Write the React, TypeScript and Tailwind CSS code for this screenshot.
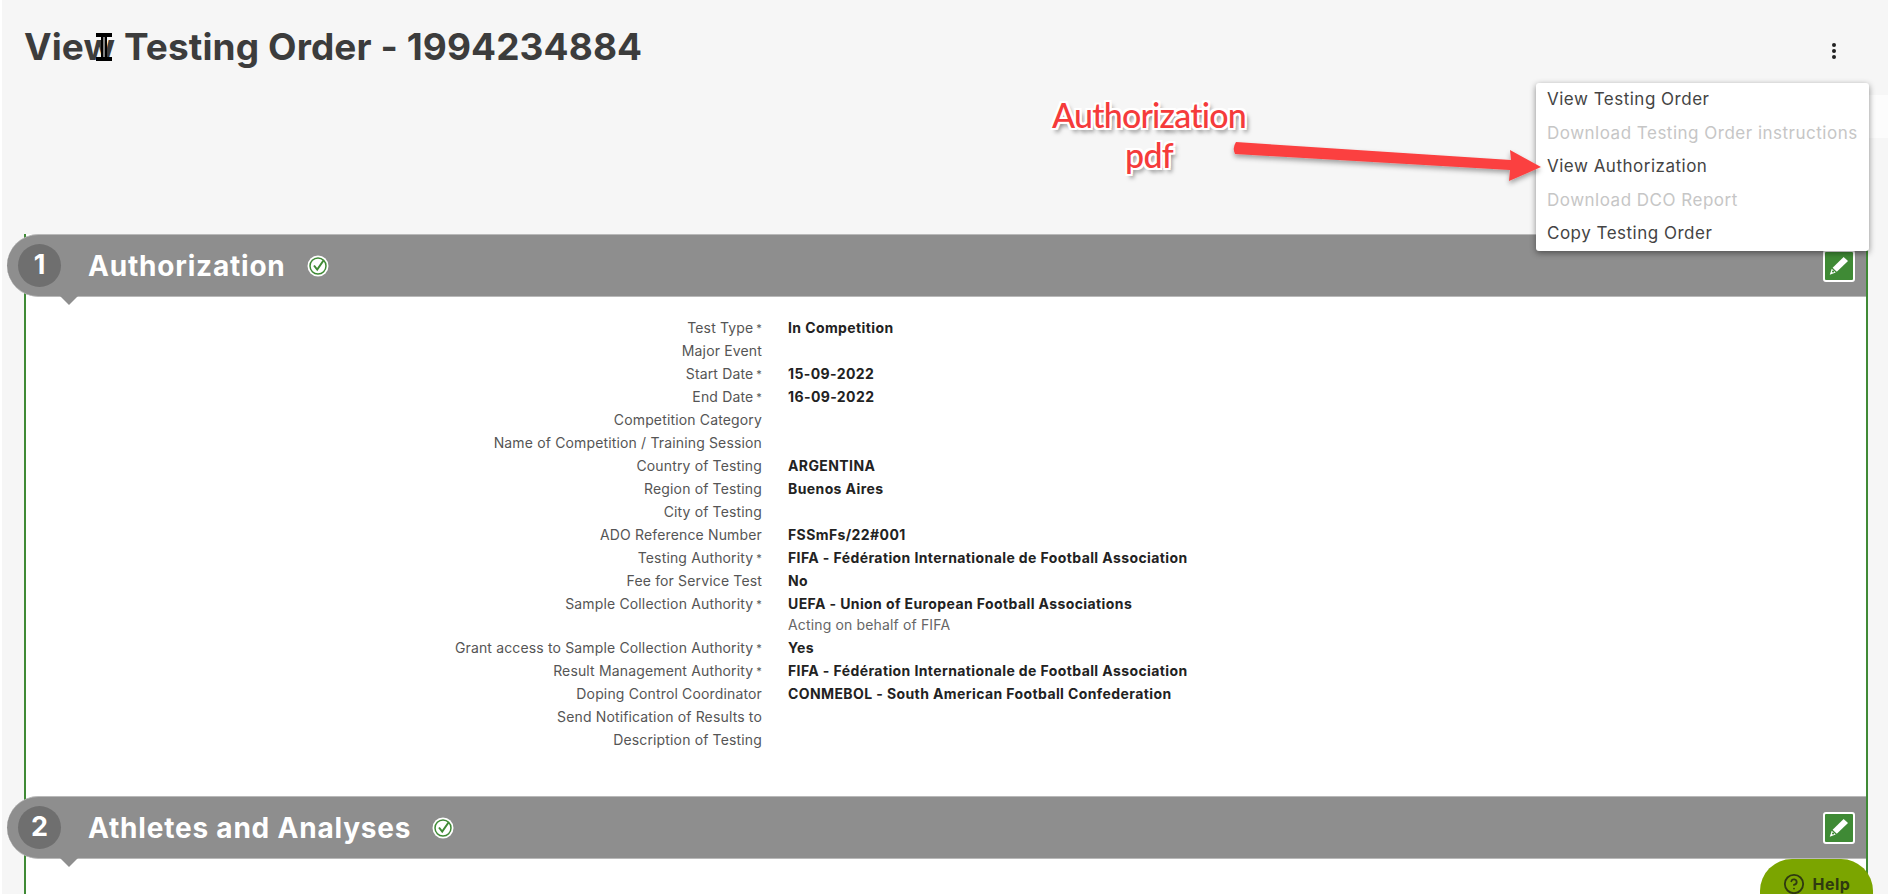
import { CircleHelp } from 'lucide-react'

interface Row {
  label: string
  required?: boolean
  value?: string
  note?: string
}

const rows: Row[] = [
  { label: 'Test Type', required: true, value: 'In Competition' },
  { label: 'Major Event' },
  { label: 'Start Date', required: true, value: '15-09-2022' },
  { label: 'End Date', required: true, value: '16-09-2022' },
  { label: 'Competition Category' },
  { label: 'Name of Competition / Training Session' },
  { label: 'Country of Testing', value: 'ARGENTINA' },
  { label: 'Region of Testing', value: 'Buenos Aires' },
  { label: 'City of Testing' },
  { label: 'ADO Reference Number', value: 'FSSmFs/22#001' },
  { label: 'Testing Authority', required: true, value: 'FIFA - Fédération Internationale de Football Association' },
  { label: 'Fee for Service Test', value: 'No' },
  {
    label: 'Sample Collection Authority',
    required: true,
    value: 'UEFA - Union of European Football Associations',
    note: 'Acting on behalf of FIFA',
  },
  { label: 'Grant access to Sample Collection Authority', required: true, value: 'Yes' },
  { label: 'Result Management Authority', required: true, value: 'FIFA - Fédération Internationale de Football Association' },
  { label: 'Doping Control Coordinator', value: 'CONMEBOL - South American Football Confederation' },
  { label: 'Send Notification of Results to' },
  { label: 'Description of Testing' },
]

const menuItems = [
  { label: 'View Testing Order' },
  { label: 'Download Testing Order instructions', disabled: true },
  { label: 'View Authorization' },
  { label: 'Download DCO Report', disabled: true },
  { label: 'Copy Testing Order' },
]

function CheckBadge() {
  return (
    <svg width="22" height="22" viewBox="0 0 22 22" className="shrink-0">
      <circle cx="11" cy="11" r="10.5" fill="#ffffff" />
      <circle cx="11" cy="11" r="8" fill="none" stroke="#3f8a35" strokeWidth="1.5" />
      <path d="M7 10.5 L10.2 14.5 L16.5 5.5" fill="none" stroke="#3f8a35" strokeWidth="2" />
    </svg>
  )
}

function EditButton() {
  return (
    <div className="flex h-8 w-8 items-center justify-center rounded-[3px] border-2 border-white bg-[#3f8a35]">
      <svg width="22" height="22" viewBox="0 0 20 20">
        <path d="M14.2 1.8 L18.2 5.4 L8 15.2 L4.2 11.6 Z" fill="#ffffff" />
        <path d="M3.4 12.6 L7 16 L1.6 18 Z" fill="#ffffff" />
        <circle cx="4.6" cy="15" r="1" fill="#3f8a35" />
      </svg>
    </div>
  )
}

function SectionHeader({ num, title }: { num: number; title: string }) {
  return (
    <div className="relative z-10 -ml-[19px] flex h-[63px] items-center rounded-l-[32px] border-y border-[#b9b9b9] bg-[#8e8e8e] pl-[11px] pr-[11px]">
      <div className="flex h-[43px] w-[43px] shrink-0 items-center justify-center rounded-full bg-[#6f6f6f] text-[27px] font-bold text-white">
        {num}
      </div>
      <h2 className="ml-[27px] mr-[21px] text-[28px] font-bold tracking-[0.8px] text-white">{title}</h2>
      <CheckBadge />
      <div className="ml-auto">
        <EditButton />
      </div>
      {/* little pointer under the number */}
      <div className="absolute left-[53px] top-[61px] h-0 w-0 border-x-[9px] border-t-[9px] border-x-transparent border-t-[#8e8e8e]" />
    </div>
  )
}

function FieldRow({ label, required, value, note }: Row) {
  return (
    <div className="flex text-[14px] leading-[23px]">
      <div className="w-[736px] shrink-0 text-right tracking-[0.15px] text-[#555555]">
        {label}
        {required && <span className="ml-[3px] align-[1px] text-[11px] leading-none">*</span>}
      </div>
      <div className="ml-[26px] tracking-[0.4px]">
        <div className="font-bold text-[#222222]">{value}</div>
        {note && <div className="-mt-[2px] tracking-[0.15px] text-[#666666]">{note}</div>}
      </div>
    </div>
  )
}

export default function App() {
  return (
    <div className="relative h-[894px] overflow-hidden bg-white font-['Inter',sans-serif]">
      <div className="ml-[2px] h-full bg-[#f6f6f6]">
        <header className="flex h-[234px] items-start justify-between pl-[22px] pr-[52px] pt-[24px]">
          <h1 className="text-[37px] font-bold leading-[46px] tracking-[0.1px] text-[#3c3c3c]">View Testing Order - 1994234884</h1>
          <div className="mt-[19px] flex flex-col gap-[2px]">
            <span className="h-1 w-1 rounded-full bg-[#222222]" />
            <span className="h-1 w-1 rounded-full bg-[#222222]" />
            <span className="h-1 w-1 rounded-full bg-[#222222]" />
          </div>
        </header>

        <main className="ml-[22px] mr-[20px] h-[660px] border-x-2 border-[#3f8a35] bg-white">
          <SectionHeader num={1} title="Authorization" />
          <div className="h-[499px] pt-[19px]">
            {rows.map((r) => (
              <FieldRow key={r.label} {...r} />
            ))}
          </div>
          <SectionHeader num={2} title="Athletes and Analyses" />
        </main>
      </div>

      {/* lighter strip beside the menu */}
      <div className="absolute left-[1869px] top-[95px] h-[43px] w-[19px] bg-[#fcfcfc]" />

      {/* overflow menu */}
      <div className="absolute left-[1536px] top-[83px] z-20 w-[333px] rounded-[3px] bg-white shadow-[0_2px_6px_rgba(0,0,0,0.45)]">
        {menuItems.map((m) => (
          <div
            key={m.label}
            className={`flex h-[33.6px] items-center pl-[11px] text-[17px] tracking-[0.5px] ${m.disabled ? 'text-[#c6c6c6]' : 'text-[#444444]'}`}
          >
            {m.label}
          </div>
        ))}
      </div>

      {/* annotation */}
      <div className="absolute left-[1029px] top-[95px] z-30 w-[240px] text-center font-['Lato',sans-serif] text-[34px] font-medium leading-[40px] tracking-[-0.8px] text-[#f53b3b] [text-shadow:-2px_-2px_0_#fff,2px_-2px_0_#fff,-2px_2px_0_#fff,2px_2px_0_#fff,0_-2px_0_#fff,0_2px_0_#fff,-2px_0_0_#fff,2px_0_0_#fff,3px_4px_4px_rgba(0,0,0,0.5)]">
        Authorization
        <br />
        pdf
      </div>
      <svg className="absolute left-0 top-0 z-30" width="1888" height="894" style={{ pointerEvents: 'none' }}>
        <defs>
          <filter id="arrow-shadow" x="-5%" y="-50%" width="110%" height="200%">
            <feDropShadow dx="0" dy="3" stdDeviation="2.5" floodColor="#000000" floodOpacity="0.35" />
          </filter>
        </defs>
        <path
          d="M1236 142 L1511 160 L1510 150 L1541 167 L1509 181 L1510 170 L1235 154 Q1232 148 1236 142 Z"
          fill="#fb4141"
          filter="url(#arrow-shadow)"
        />
      </svg>

      {/* text cursor over the title */}
      <svg className="absolute left-[95px] top-[33px] z-30" width="18" height="28" viewBox="0 0 18 28">
        <path d="M1 2 H17 M1 26 H17" stroke="#000000" strokeWidth="4" />
        <path d="M9 2 V26" stroke="#000000" strokeWidth="6" />
        <path d="M9 4 V24" stroke="#ffffff" strokeWidth="1" />
      </svg>

      {/* help tab */}
      <div className="absolute left-[1760px] top-[859px] z-30 flex h-[50px] w-[113px] items-start justify-center gap-[8px] rounded-t-[32px] bg-[#7ba500] pt-[14px] text-[#2f3a10]">
        <CircleHelp size={22} strokeWidth={2} />
        <span className="text-[16px] font-bold leading-[22px] tracking-[0.5px]">Help</span>
      </div>
    </div>
  )
}
